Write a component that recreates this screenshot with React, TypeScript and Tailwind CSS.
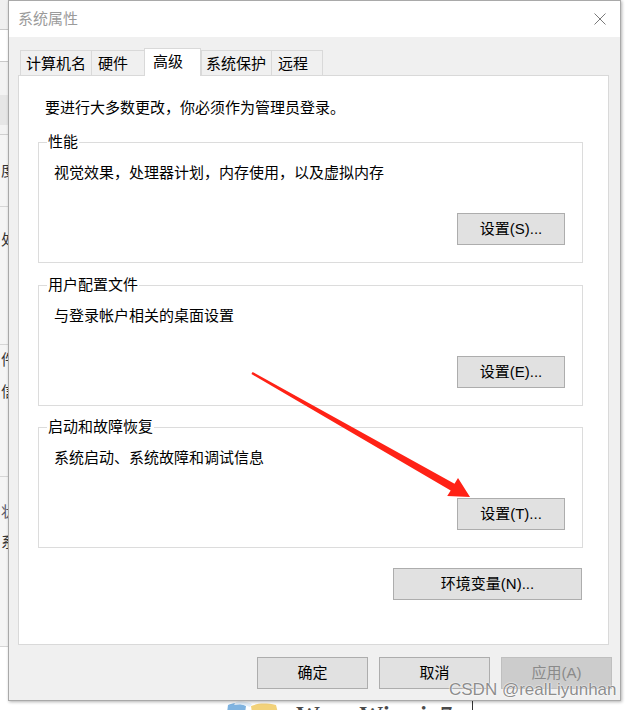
import React from 'react'

function WinButton({ label, width, disabled }: { label: string; width: string; disabled?: boolean }) {
  return (
    <button
      className={
        disabled
          ? `${width} h-[32px] shrink-0 border border-[#bfbfbf] bg-[#cccccc] text-[#8a8a8a] text-[15px] leading-[20px]`
          : `${width} h-[32px] shrink-0 border border-[#adadad] bg-[#e1e1e1] text-black text-[15px] leading-[20px]`
      }
    >
      {label}
    </button>
  )
}

function GroupBox({ title, desc, button, className }: { title: string; desc: string; button: string; className: string }) {
  return (
    <div className={`relative ml-[19px] w-[545px] border border-[#dcdcdc] flex flex-col ${className}`}>
      <span className="absolute -top-[11px] left-[8px] bg-white px-px text-[15px] leading-[20px]">{title}</span>
      <p className="pl-[15px] pt-[20px] text-[15px] leading-[20px]">{desc}</p>
      <div className="flex justify-end mt-[30px] mr-[17px] mb-[17px]">
        <WinButton label={button} width="w-[108px]" />
      </div>
    </div>
  )
}

const tabs = [
  { label: '计算机名', w: 'w-[71px]', pl: 'pl-[5px]' },
  { label: '硬件', w: 'w-[53px]', pl: 'pl-[6px]' },
  { label: '高级', w: 'w-[57px]', pl: 'pl-[8px]', active: true },
  { label: '系统保护', w: 'w-[70px]', pl: 'pl-[4px]' },
  { label: '远程', w: 'w-[52px]', pl: 'pl-[6px]', last: true },
]

function Backdrop() {
  return (
    <>
      {/* window behind, left edge */}
      <div className="absolute left-0 top-0 w-[9px] h-[701px] bg-[#f7f7f7] overflow-hidden flex flex-col text-[15px] leading-[20px] text-[#333]">
        <div className="h-[30px] border-b border-[#c9c9c9] bg-[#f0f0f0]" />
        <div className="h-[32px] border-b border-[#c9c9c9] bg-white" />
        <div className="h-[33px] bg-[#f3f3f3]" />
        <div className="h-[30px] bg-[#e6e6e6]" />
        <div className="h-[10px] border-b border-[#d0d0d0] bg-[#f3f3f3]" />
        <div className="h-[72px] border-b border-[#d6d6d6] flex items-center justify-end -mr-[7px] bg-[#f5f5f5]">
          <span>度</span>
        </div>
        <div className="h-[138px] border-b border-[#d6d6d6] flex items-start pt-[23px] justify-end -mr-[7px] bg-[#f5f5f5]">
          <span>处</span>
        </div>
        <div className="h-[132px] border-b border-[#d6d6d6] flex flex-col items-end pt-[3px] -mr-[7px] bg-[#f5f5f5]">
          <span className="leading-[24px]">件</span>
          <span className="leading-[24px] mt-[8px]">信</span>
        </div>
        <div className="h-[170px] border-b border-[#d6d6d6] flex flex-col items-end pt-[23px] -mr-[7px] bg-[#f5f5f5]">
          <span className="leading-[24px] text-[#556]">状</span>
          <span className="leading-[24px] mt-[6px]">系</span>
        </div>
        <div className="flex-1 bg-white" />
      </div>
      {/* desktop below the dialog */}
      <div className="absolute left-0 top-[701px] w-[629px] h-[9px] bg-white overflow-hidden">
        <svg className="absolute left-[224px] top-0" width="58" height="12" viewBox="0 0 58 12">
          <path d="M4 4 C10 1 16 2 22 5 L21 12 L3 12 Z" fill="#7fb3e0" />
          <path d="M27 5 C34 2 42 2 52 4 L54 12 L28 12 Z" fill="#f2d27a" />
          <path d="M12 1 C18 0 24 1 28 3 L26 6 C20 3 16 3 10 4 Z" fill="#e3eef8" />
        </svg>
        <span className="absolute left-[296px] top-[1px] font-['Liberation_Serif',serif] font-bold text-[24px] leading-[24px] text-[#4a4a4a]">
          Www.Winwin7.com
        </span>
        <div className="absolute left-[472px] top-0 w-px h-[9px] bg-[#333]" />
      </div>
    </>
  )
}

export default function App() {
  return (
    <div className="relative w-[629px] h-[710px] overflow-hidden bg-white text-black font-['Liberation_Sans','Noto_Sans_CJK_SC',sans-serif]">
      <Backdrop />

      {/* dialog window */}
      <div className="absolute left-[8px] top-0 w-[613px] h-[701px] border border-[#a9a9a9] flex flex-col shadow-[1px_1px_3px_rgba(0,0,0,0.3)]">
        <div className="h-[36px] bg-white flex items-center justify-between pl-[9px] pr-[14px]">
          <span className="text-[15px] leading-[20px] text-[#9b9b9b]">系统属性</span>
          <svg width="12" height="12" viewBox="0 0 12 12">
            <path d="M0.5 0.5 L11.5 11.5 M11.5 0.5 L0.5 11.5" stroke="#7a7a7a" strokeWidth="1" />
          </svg>
        </div>

        <div className="flex-1 bg-[#f0f0f0] pl-[9px] pt-[11px] flex flex-col">
          <div className="flex items-end ml-[2px] h-[27px]">
            {tabs.map((t) =>
              t.active ? (
                <div
                  key={t.label}
                  className={`${t.w} ${t.pl} h-[28px] -mb-px relative z-10 bg-white border-t border-l border-r border-[#d9d9d9] text-[15px] leading-[26px]`}
                >
                  {t.label}
                </div>
              ) : (
                <div
                  key={t.label}
                  className={`${t.w} ${t.pl} h-[25px] border-t border-l ${t.last ? 'border-r' : ''} border-[#d9d9d9] text-[15px] leading-[26px]`}
                >
                  {t.label}
                </div>
              )
            )}
          </div>

          <div className="w-[591px] h-[570px] bg-white border border-[#d9d9d9] flex flex-col">
            <p className="pl-[26px] pt-[22px] text-[15px] leading-[20px]">要进行大多数更改，你必须作为管理员登录。</p>
            <GroupBox className="mt-[24px]" title="性能" desc="视觉效果，处理器计划，内存使用，以及虚拟内存" button="设置(S)..." />
            <GroupBox className="mt-[22px]" title="用户配置文件" desc="与登录帐户相关的桌面设置" button="设置(E)..." />
            <GroupBox className="mt-[21px]" title="启动和故障恢复" desc="系统启动、系统故障和调试信息" button="设置(T)..." />
            <div className="ml-[19px] w-[545px] mt-[20px] flex justify-end pr-[1px]">
              <WinButton label="环境变量(N)..." width="w-[189px]" />
            </div>
          </div>

          <div className="flex justify-end gap-[11px] pr-[8px] mt-[12px]">
            <WinButton label="确定" width="w-[111px]" />
            <WinButton label="取消" width="w-[111px]" />
            <WinButton label="应用(A)" width="w-[111px]" disabled />
          </div>
        </div>
      </div>

      {/* red annotation arrow */}
      <svg className="absolute left-0 top-0 pointer-events-none" width="629" height="710" viewBox="0 0 629 710">
        <polygon
          points="252.6,371.9 454.5,483.7 458.0,478.0 470,497 447.2,496.0 450.7,490.4 251.4,374.1"
          fill="#ff2216"
        />
      </svg>

      {/* watermark */}
      <span className="absolute left-[449px] top-[680px] text-[17px] leading-[20px] text-[rgba(110,110,110,0.8)] [text-shadow:0_0_2px_#fff,0_0_1px_#fff]">
        CSDN @realLiyunhan
      </span>
    </div>
  )
}
